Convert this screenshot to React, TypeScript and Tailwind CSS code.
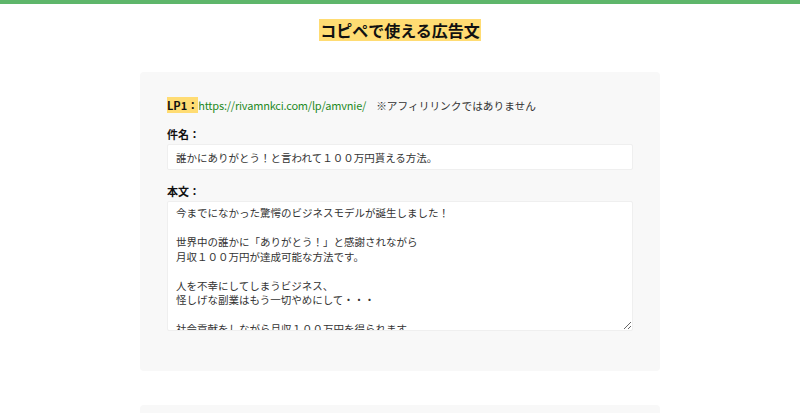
import React from 'react';

const body = `今までになかった驚愕のビジネスモデルが誕生しました！

世界中の誰かに「ありがとう！」と感謝されながら
月収１００万円が達成可能な方法です。

人を不幸にしてしまうビジネス、
怪しげな副業はもう一切やめにして・・・

社会貢献をしながら月収１００万円を得られます。

まずは無料で詳細をご確認ください。`;

const App: React.FC = () => {
  return (
    <div className="min-h-screen bg-white text-[#333] font-['Noto_Sans_CJK_JP','Noto_Sans',sans-serif]">
      <div className="h-[4px] bg-[#5eb66b]"></div>
      <div className="pt-[14px] text-center">
        <span className="inline-block bg-[#ffdc73] px-[1px] text-[16px] leading-[22px] font-bold text-[#111]">
          コピペで使える広告文
        </span>
      </div>

      <div className="mx-auto mt-[30px] w-[520px] rounded-[4px] bg-[#f8f8f8] px-[27px] pt-[25px] pb-[40px]">
        <p className="text-[11px] leading-[16px]">
          <span className="bg-[#ffdc73] font-bold text-[#111]">LP1：</span>
          <span className="text-[#1f8a1f] tracking-[-0.2px]">https://rivamnkci.com/lp/amvnie/</span>
          <span className="ml-[10px] text-[10.7px] text-[#333]">※アフィリリンクではありません</span>
        </p>

        <p className="mt-[12px] mb-[2px] text-[11px] leading-[16px] font-bold text-[#111]">件名：</p>
        <input
          readOnly
          value="誰かにありがとう！と言われて１００万円貰える方法。"
          className="block h-[26px] w-full rounded-[2px] border border-[#efefef] bg-white px-[8px] text-[10.5px] text-[#333] outline-none"
        />

        <p className="mt-[13px] mb-[2px] text-[11px] leading-[16px] font-bold text-[#111]">本文：</p>
        <textarea
          readOnly
          defaultValue={body}
          className="block h-[130px] w-full resize-y overflow-hidden rounded-[2px] border border-[#efefef] bg-white px-[8px] pt-[4px] text-[10.5px] leading-[14.5px] text-[#333] outline-none"
        />
      </div>

      <div className="mx-auto mt-[34px] h-[120px] w-[520px] rounded-[4px] bg-[#f8f8f8]"></div>
    </div>
  );
};

export default App;
